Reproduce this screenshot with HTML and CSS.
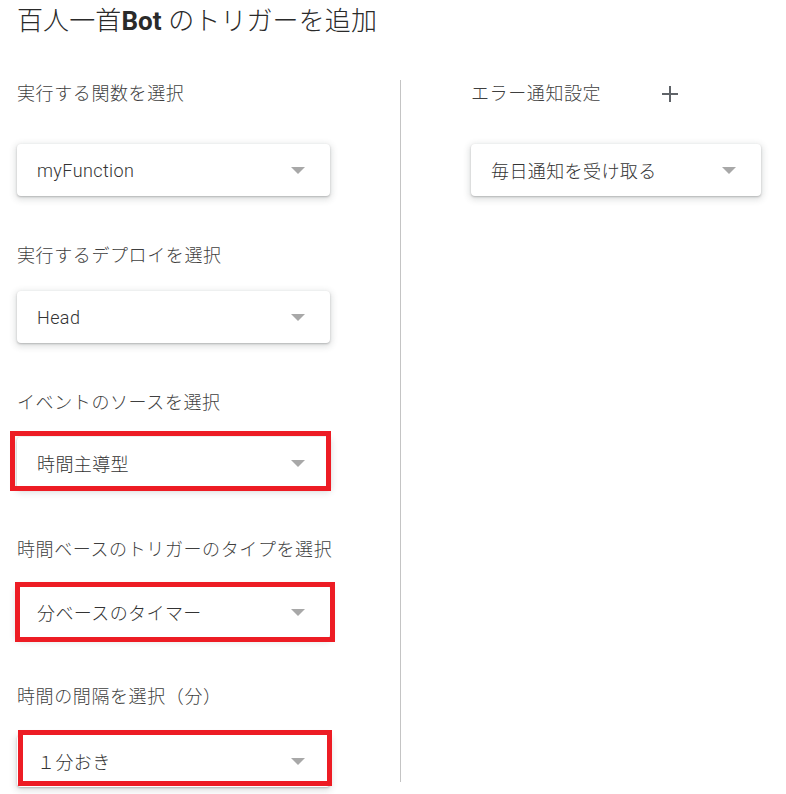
FILE: index.html
```html
<!DOCTYPE html>
<html lang="ja">
<head>
<meta charset="utf-8">
<title>トリガーを追加</title>
<link rel="stylesheet" href="styles.css">
</head>
<body>
<div class="page">
  <h1 class="title">百人一首<b>Bot</b> のトリガーを追加</h1>
  <div class="columns">
    <div class="col-left">
      <div class="label l1">実行する関数を選択</div>
      <div class="select s1"><span class="value">myFunction</span><span class="arrow"></span></div>

      <div class="label l2">実行するデプロイを選択</div>
      <div class="select s2"><span class="value">Head</span><span class="arrow"></span></div>

      <div class="label l3">イベントのソースを選択</div>
      <div class="select s3"><span class="value">時間主導型</span><span class="arrow"></span><span class="mark m3"></span></div>

      <div class="label l4">時間ベースのトリガーのタイプを選択</div>
      <div class="select s4"><span class="value">分ベースのタイマー</span><span class="arrow"></span><span class="mark m4"></span></div>

      <div class="label l5">時間の間隔を選択（分）</div>
      <div class="select s5"><span class="value">１分おき</span><span class="arrow"></span><span class="mark m5"></span></div>
    </div>
    <div class="divider"></div>
    <div class="col-right">
      <div class="label-row">
        <div class="label">エラー通知設定</div>
        <svg class="plus" width="18" height="18" viewBox="0 0 18 18" aria-hidden="true">
          <path d="M9 1v16M1 9h16" stroke="#5f6368" stroke-width="2" fill="none"/>
        </svg>
      </div>
      <div class="select sr"><span class="value">毎日通知を受け取る</span><span class="arrow"></span></div>
    </div>
  </div>
</div>
</body>
</html>
```

FILE: styles.css
```css
html, body {
  margin: 0;
  padding: 0;
  background: #ffffff;
}
body {
  font-family: Roboto, "Noto Sans CJK JP", sans-serif;
  color: #4a4a4a;
  width: 786px;
  height: 794px;
  overflow: hidden;
}
.page {
  padding: 4px 0 0 17px;
}
.title {
  margin: 0;
  font-size: 26px;
  line-height: 34px;
  font-weight: 300;
  color: #2a2a2a;
  letter-spacing: 0.1px;
}
.title b {
  font-weight: 700;
}
.columns {
  display: flex;
  align-items: flex-start;
  margin-top: 42px;
}
.col-left {
  width: 313px;
  display: flex;
  flex-direction: column;
}
.divider {
  width: 1px;
  height: 702px;
  background: #c4c4c4;
  margin-left: 70px;
}
.col-right {
  margin-left: 70px;
  width: 290px;
  display: flex;
  flex-direction: column;
}
.label {
  font-size: 18px;
  line-height: 28px;
  letter-spacing: 0.6px;
  font-weight: 300;
  color: #3f3f3f;
  white-space: nowrap;
}
.label-row {
  display: flex;
  align-items: center;
  height: 28px;
}
.plus {
  margin-left: 60px;
}
.select {
  position: relative;
  height: 52px;
  background: #ffffff;
  border-radius: 4px;
  box-shadow: 0 1px 2px rgba(60, 64, 67, 0.3), 0 2px 6px 2px rgba(60, 64, 67, 0.15);
  display: flex;
  align-items: center;
  justify-content: space-between;
  padding: 0 25px 0 20px;
  font-size: 18px;
  color: #333333;
}
.value {
  letter-spacing: 0.4px;
  font-weight: 300;
  white-space: nowrap;
}
.arrow {
  width: 0;
  height: 0;
  border-left: 7px solid transparent;
  border-right: 7px solid transparent;
  border-top: 7px solid #a8a8a8;
}
.s1 { margin-top: 36px; }
.l2 { margin-top: 46px; }
.s2 { margin-top: 21px; }
.l3 { margin-top: 46px; }
.s3 { margin-top: 20px; }
.l4 { margin-top: 47px; }
.s4 { margin-top: 22px; }
.l5 { margin-top: 45px; }
.s5 { margin-top: 24px; }
.sr { margin-top: 36px; }

.mark {
  position: absolute;
  border: 5px solid #ed1c24;
  pointer-events: none;
}
.m3 { left: -7px; top: -6px; right: -1px; bottom: -2px; }
.m4 { left: -2px; top: -4px; right: -5px; bottom: -4px; }
.m5 { left: 1px; top: -5px; right: -2px; bottom: 1px; }
```
